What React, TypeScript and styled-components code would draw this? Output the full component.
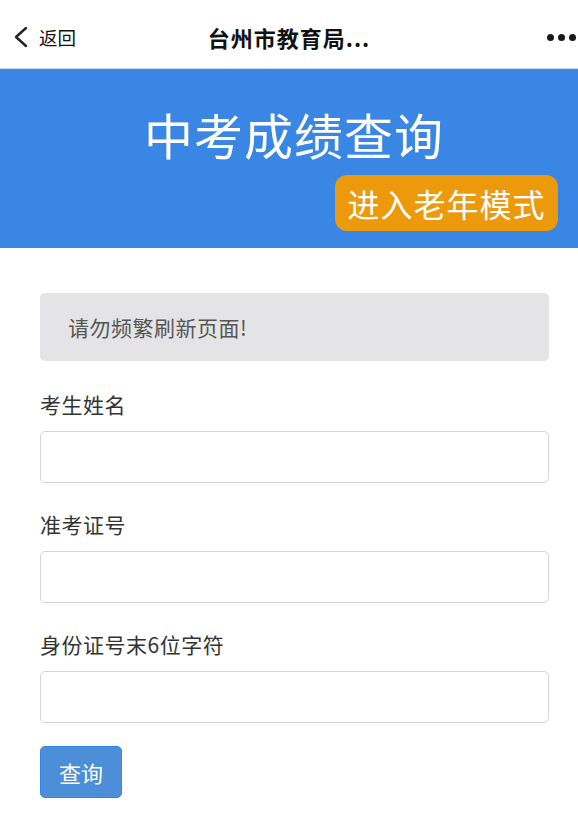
import React from "react";
import styled, { createGlobalStyle } from "styled-components";

const Global = createGlobalStyle`
  html, body { margin: 0; padding: 0; background: #fff; }
  body { font-family: "Noto Sans CJK SC", "Noto Sans", sans-serif; }
  * { box-sizing: border-box; }
`;

const Nav = styled.header`
  height: 69px;
  display: grid;
  grid-template-columns: 120px 1fr 120px;
  align-items: center;
  padding-top: 6px;
  border-bottom: 1px solid #c9dcf3;
`;

const Back = styled.div`
  display: flex;
  align-items: center;
  gap: 9px;
  padding-left: 12px;
  font-size: 18.5px;
  color: #111;
`;

const NavTitle = styled.div`
  text-align: center;
  font-size: 22px;
  font-weight: 700;
  color: #111;
  letter-spacing: 1px;
`;

const More = styled.div`
  display: flex;
  justify-content: flex-end;
  gap: 4px;
  padding-right: 2px;
`;

const Dot = styled.span`
  width: 7px;
  height: 7px;
  border-radius: 50%;
  background: #1a1a1a;
`;

const Banner = styled.section`
  height: 179px;
  background: #3a86e4;
  display: flex;
  flex-direction: column;
  padding: 37px 20px 0 20px;
`;

const BannerTitle = styled.h1`
  margin: 0;
  padding-left: 10px;
  text-align: center;
  color: #fff;
  font-size: 49px;
  font-weight: 400;
  line-height: 55px;
  letter-spacing: 1px;
`;

const ElderButton = styled.button`
  align-self: flex-end;
  margin-top: 14px;
  height: 56px;
  width: 223px;
  border: none;
  border-radius: 12px;
  background: #ec9a0c;
  color: #fff;
  font-family: inherit;
  font-size: 32px;
  line-height: 1;
  padding: 0;
  letter-spacing: 1px;
`;

const Content = styled.main`
  padding: 45px 29px 20px 40px;
  display: flex;
  flex-direction: column;
`;

const Notice = styled.div`
  height: 68px;
  background: #e4e4e6;
  border-radius: 5px;
  display: flex;
  align-items: center;
  padding-left: 28px;
  font-size: 21px;
  letter-spacing: 0.5px;
  color: #555;
`;

const Field = styled.div<{ $top: number }>`
  display: flex;
  flex-direction: column;
  margin-top: ${(p) => p.$top}px;
`;

const Label = styled.label`
  font-size: 21px;
  line-height: 28px;
  letter-spacing: 0.5px;
  color: #333;
  margin-bottom: 13px;
`;

const Input = styled.input`
  height: 52px;
  border: 1.5px solid #d6d6d8;
  border-radius: 5px;
  background: #fff;
  font-size: 18px;
  padding: 0 12px;
  outline: none;
`;

const Submit = styled.button`
  align-self: flex-start;
  margin-top: 23px;
  width: 82px;
  height: 52px;
  background: #4c8ed8;
  border: 1.5px solid #2d85ef;
  border-radius: 5px;
  color: #fff;
  font-family: inherit;
  font-size: 22px;
  padding: 0;
`;

export default function App() {
  return (
    <>
      <Global />
      <Nav>
        <Back>
          <svg width="18" height="22" viewBox="0 0 18 22" fill="none">
            <path d="M14 2 L4 11 L14 20" stroke="#222" strokeWidth="2.4" strokeLinecap="round" strokeLinejoin="round" />
          </svg>
          <span>返回</span>
        </Back>
        <NavTitle>台州市教育局...</NavTitle>
        <More>
          <Dot />
          <Dot />
          <Dot />
        </More>
      </Nav>
      <Banner>
        <BannerTitle>中考成绩查询</BannerTitle>
        <ElderButton>进入老年模式</ElderButton>
      </Banner>
      <Content>
        <Notice>请勿频繁刷新页面!</Notice>
        <Field $top={29}>
          <Label>考生姓名</Label>
          <Input type="text" />
        </Field>
        <Field $top={27}>
          <Label>准考证号</Label>
          <Input type="text" />
        </Field>
        <Field $top={27}>
          <Label>身份证号末6位字符</Label>
          <Input type="text" />
        </Field>
        <Submit>查询</Submit>
      </Content>
    </>
  );
}
